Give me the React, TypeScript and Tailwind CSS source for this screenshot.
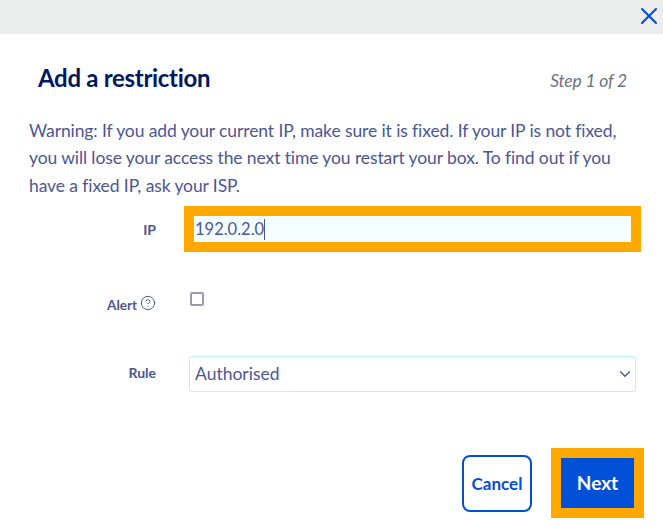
import { ChevronDown, CircleHelp, X } from "lucide-react"

const font = { fontFamily: 'Lato, "Noto Sans", sans-serif' }

export default function App() {
  return (
    <div className="h-[529px] w-[663px] overflow-hidden bg-white text-[#4d5693]" style={font}>
      <div className="flex h-[34px] items-start justify-end bg-[#eceeed] pt-[2px]">
        <X className="h-[28px] w-[28px] text-[#0050d7]" strokeWidth={1.8} />
      </div>

      <div className="flex items-start justify-between pl-[38px] pr-[36px] pt-[28px]">
        <h1 className="text-[24px] font-bold leading-[32px] tracking-[-0.3px] text-[#00185e]">Add a restriction</h1>
        <span className="mt-[3px] text-[17.5px] italic leading-[32px] tracking-[-0.2px] text-[#6b7280]">Step 1 of 2</span>
      </div>

      <p className="pl-[29px] pr-[30px] pt-[19.5px] text-[17.5px] leading-[27.5px] tracking-[-0.1px]">
        Warning: If you add your current IP, make sure it is fixed. If your IP is not fixed, you will lose your access the next time you restart your box. To find out if you have a fixed IP, ask your ISP.
      </p>

      <div className="mt-[7px] flex h-[46px] items-center">
        <label className="w-[156px] text-right text-[14px] font-bold">IP</label>
        <div className="ml-[28px] flex h-[46px] w-[457px] items-center border-[10px] border-[#ffa800] bg-[#f4fdff] pl-[1px]">
          <span className="text-[16.5px] leading-[26px]">192.0.2.0</span>
          <span className="h-[21px] w-px bg-[#4d5693]" />
        </div>
      </div>

      <div className="mt-[40px] flex h-[14px]">
        <label className="flex w-[156px] items-center justify-end gap-[3px] pt-[12px] text-[13.5px] font-bold">
          Alert
          <CircleHelp className="mb-[5px] h-[16px] w-[16px] text-[#4d5693]" strokeWidth={1.5} />
        </label>
        <span className="ml-[34px] h-[14px] w-[14px] rounded-[2px] border-2 border-[#9b9cb0]" />
      </div>

      <div className="mt-[50px] flex h-[36px] items-center">
        <label className="w-[156px] pb-[3px] text-right text-[14px] font-bold">Rule</label>
        <div className="ml-[33px] flex h-[36px] w-[447px] items-center justify-between rounded-[2px] border border-[#bef1ff] pl-[5px] pr-[1px]">
          <span className="text-[17.5px]">Authorised</span>
          <ChevronDown className="h-[18px] w-[18px]" strokeWidth={1.8} />
        </div>
      </div>

      <div className="mt-[56px] flex items-start justify-end pr-[19px]">
        <button className="mt-[7px] h-[57px] w-[70px] rounded-[8px] border-2 border-[#0050d7] text-[17px] font-bold text-[#0050d7]">Cancel</button>
        <div className="ml-[19px] border-[10px] border-[#ffa800]">
          <button className="block h-[50px] w-[73px] bg-[#0050d7] text-[19px] font-bold text-white">Next</button>
        </div>
      </div>
    </div>
  )
}
